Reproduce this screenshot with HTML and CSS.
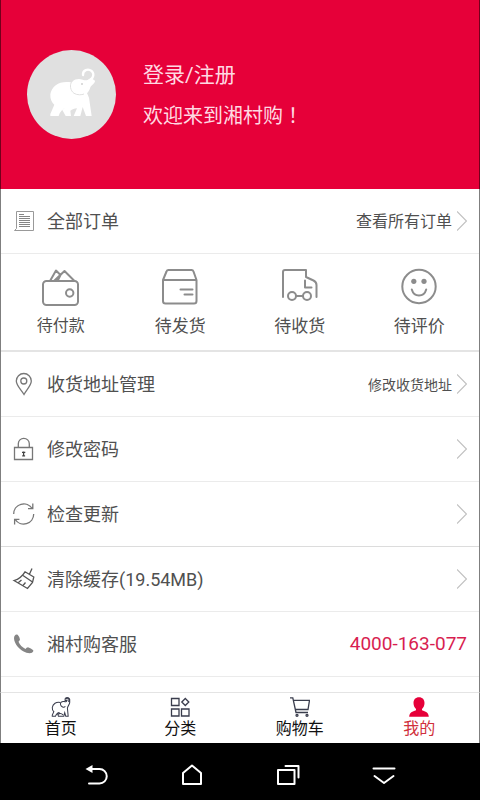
FILE: index.html
```html
<!DOCTYPE html>
<html lang="zh-CN">
<head>
<meta charset="utf-8">
<meta name="viewport" content="width=device-width, initial-scale=1">
<title>我的</title>
<link rel="stylesheet" href="styles.css">
</head>
<body>
<div class="app">
  <header class="profile">
    <svg class="avatar" viewBox="36 15 267 267" aria-hidden="true">
      <g fill="#fff">
        <path d="M168 112C138 106 110 120 106 148C105 162 110 172 118 179L106 207V213H131C134 202 142 193 152 187L142 195L152 213H168L166 197C172 193 178 191 186 190L176 213H196L203 186L213 213H230L222 158L215 142Z"/>
        <path d="M167 126C165 108 184 97 203 104C216 109 224 103 228 98L240 107C240 116 231 117 226 127C221 146 208 152 197 150C178 150 168 142 167 126Z"/>
        <path fill="none" stroke="#fff" stroke-width="7" stroke-linecap="round" d="M204 90C203 76 218 69 230 78C240 88 234 103 219 108"/>
      </g>
      <path fill="none" stroke="#e0e0e0" stroke-width="3" d="M171 108C163 120 166 137 177 145C188 151 200 150 207 147"/>
      <circle cx="201" cy="117" r="3" fill="#d0d0d0"/>
    </svg>
    <div class="profile-text">
      <a class="profile-login" href="#login">登录/注册</a>
      <p class="profile-welcome">欢迎来到湘村购<span class="mark" lang="zh-TW">！</span></p>
    </div>
  </header>

  <main class="content">
    <a class="row" href="#orders">
      <svg class="row-icon" viewBox="0 0 24 24" aria-hidden="true"><path stroke="#999" stroke-width="1" d="M4.500 2.500H21.500V21.500H2.500L4.500 19.500Z"/><path stroke="#858585" stroke-width="1" d="M7 5.500H12M7 7.500H18M7 9.500H18M7 11.500H18M7 13.500H18M7 15.500H18M7 17.500H18"/></svg>
      <span class="row-label">全部订单</span>
      <span class="row-note">查看所有订单</span>
      <svg class="chevron" viewBox="0 0 10 20" aria-hidden="true"><path d="M0 .5L9.500 10L0 19.500"/></svg>
    </a>

    <nav class="orders" aria-label="订单">
      <a class="order" href="#pay">
        <svg class="order-icon" viewBox="0 0 40 40" aria-hidden="true"><rect x="2" y="14" width="35" height="24" rx="3.500"/><circle cx="28.700" cy="26" r="3.700"/><path d="M9 14L15 3.500L18.500 7M13 14L23.500 4L33.500 14M16.500 14L19.500 8"/></svg>
        <span class="order-label order-label-compact">待付款</span>
      </a>
      <a class="order" href="#ship">
        <svg class="order-icon" viewBox="0 0 40 40" aria-hidden="true"><path d="M3 13L6.500 4.500Q7 3 8.500 3H31.500Q33 3 33.500 4.500L36.500 13V34Q36.500 36.500 34 36.500H5.500Q3 36.500 3 34ZM3 13H36.500M20.500 22.500H32.500M24.500 27.500H32.500"/></svg>
        <span class="order-label">待发货</span>
      </a>
      <a class="order" href="#receive">
        <svg class="order-icon" viewBox="0 0 40 40" aria-hidden="true"><path d="M3 30V5Q3 3 5 3H26V10L33.500 13.500Q36.500 15 36.500 18V30M25 13.500V20.500H31.500M16 29H23"/><circle cx="12" cy="29" r="4"/><circle cx="27" cy="29" r="4"/></svg>
        <span class="order-label">待收货</span>
      </a>
      <a class="order" href="#review">
        <svg class="order-icon" viewBox="0 0 40 40" aria-hidden="true"><circle cx="20" cy="19.500" r="16.700"/><path d="M12.800 22.500C15 30.500 25 30.500 27.200 22.500"/><g fill="#8c8c8c" stroke="none"><circle cx="14.800" cy="14.300" r="2.600"/><circle cx="25" cy="14.300" r="2.600"/></g></svg>
        <span class="order-label">待评价</span>
      </a>
    </nav>

    <a class="row" href="#address">
      <svg class="row-icon" viewBox="0 0 24 24" aria-hidden="true"><path d="M12 22.500C9 17.500 4.300 13.500 4.300 9A7.500 7.500 0 0 1 19.300 9C19.300 13.500 14.500 17.500 12 22.500Z"/><circle cx="11.800" cy="9" r="3"/></svg>
      <span class="row-label">收货地址管理</span>
      <span class="row-note row-note-small">修改收货地址</span>
      <svg class="chevron" viewBox="0 0 10 20" aria-hidden="true"><path d="M0 .5L9.500 10L0 19.500"/></svg>
    </a>
    <a class="row" href="#password">
      <svg class="row-icon" viewBox="0 0 24 24" aria-hidden="true"><path d="M2.500 10.500H20.500V22.500H2.500ZM6.300 10.500V6.800A5.500 5.500 0 0 1 17.300 6.800V10.500"/><path stroke="#444" d="M11.600 14.500V19M10 15.300H13.300M10.200 18.800H13.100"/></svg>
      <span class="row-label">修改密码</span>
      <svg class="chevron" viewBox="0 0 10 20" aria-hidden="true"><path d="M0 .5L9.500 10L0 19.500"/></svg>
    </a>
    <a class="row row-section-end" href="#update">
      <svg class="row-icon" viewBox="0 0 24 24" aria-hidden="true"><path d="M1.700 12A10 10 0 0 1 20.200 6.700M20.800 1.500V6.700H16M21.700 12A10 10 0 0 1 3.200 17.300M2.600 22.500V17.300H7.400"/></svg>
      <span class="row-label">检查更新</span>
      <svg class="chevron" viewBox="0 0 10 20" aria-hidden="true"><path d="M0 .5L9.500 10L0 19.500"/></svg>
    </a>
    <button class="row" type="button">
      <svg class="row-icon" viewBox="0 0 24 24" aria-hidden="true"><path stroke="#555" d="M20 1.500L17.300 7.500M13 4.800L21.800 10L20.500 15.500L15.500 21.500L2 13.500Q9 11.500 13 4.800ZM11 8.500L20.500 15M6.500 15.500L9.500 13M11 18.500L13.500 15.500"/></svg>
      <span class="row-label">清除缓存(19.54MB)</span>
      <svg class="chevron" viewBox="0 0 10 20" aria-hidden="true"><path d="M0 .5L9.500 10L0 19.500"/></svg>
    </button>
    <a class="row" href="tel:4000163077">
      <svg class="row-icon" viewBox="0 0 24 24" aria-hidden="true"><path fill="#858585" stroke="none" d="M2.500 4Q4 2 5.700 2.800Q8 5.500 8 7.500Q7.500 9 6.500 9.800Q8.500 14.500 13.500 17Q14.500 15.300 16 15.200Q19 16 21.300 18.200Q21.700 19.500 20 20.800C16 22.500 9 19 5.500 14.500C2.500 10.500 1.300 6.500 2.500 4Z"/></svg>
      <span class="row-label">湘村购客服</span>
      <span class="row-phone">4000-163-077</span>
    </a>
  </main>

  <nav class="tabs" aria-label="主导航">
    <a class="tab" href="#home">
      <svg class="tab-icon" viewBox="100 64 148 156" aria-hidden="true"><path stroke-width="8" d="M168 106C138 100 110 116 106 146C105 162 110 172 118 179L106 205V214H131C134 202 142 193 152 187C160 180 168 190 150 200L154 214H196L203 186L211 214H230L224 150C228 130 242 122 242 106V82C236 66 214 66 206 78V92L222 88C222 98 212 104 200 100C180 94 166 108 170 124C176 142 196 150 208 138M150 200Q172 184 190 204"/><path stroke-width="12" d="M210 76Q226 64 238 82L236 104"/></svg>
      <span class="tab-label">首页</span>
    </a>
    <a class="tab" href="#category">
      <svg class="tab-icon" viewBox="0 0 20 20" aria-hidden="true"><path d="M1.500 1.500H9V8.500H1.500ZM1.500 12H9V19H1.500ZM11.500 12H19V19H11.500ZM15.300 1.500L18.800 5L15.300 8.500L11.800 5Z"/></svg>
      <span class="tab-label">分类</span>
    </a>
    <a class="tab" href="#cart">
      <svg class="tab-icon" viewBox="0 0 20 20" aria-hidden="true"><path d="M0 .8H2.800L6 15.500H18M3.500 3.300H19.500L18 12.500H5.500"/><circle cx="7" cy="18.300" r="1"/><circle cx="17" cy="18.300" r="1"/></svg>
      <span class="tab-label">购物车</span>
    </a>
    <a class="tab tab-active" href="#me" aria-current="page">
      <svg class="tab-icon" viewBox="0 0 20 20" aria-hidden="true"><path fill="#e60039" stroke="none" d="M10 .3C13.500 .3 15.500 2.700 15.500 6C15.500 8.500 14.500 10.700 13 12V13.300C16.500 14.500 19.500 15.500 19.800 19.800H.2C.5 15.500 3.500 14.500 7 13.300V12C5.500 10.700 4.500 8.500 4.500 6C4.500 2.700 6.500 .3 10 .3Z"/></svg>
      <span class="tab-label">我的</span>
    </a>
  </nav>

  <footer class="system">
    <button class="system-key" type="button" aria-label="返回"><svg class="system-icon" viewBox="0 0 24 24"><path d="M7 6H15.500A7.200 7.200 0 0 1 15.500 20.500H5"/><path fill="#fff" stroke="none" d="M1.500 6L8.500 2V10Z"/></svg></button>
    <button class="system-key" type="button" aria-label="主屏幕"><svg class="system-icon" viewBox="0 0 24 24"><path d="M3 10L12 2.500L21 10V21H3Z"/></svg></button>
    <button class="system-key" type="button" aria-label="最近任务"><svg class="system-icon" viewBox="0 0 24 24"><path d="M2 7H18.500V21H2ZM9.500 3H22.500V14.500"/></svg></button>
    <button class="system-key" type="button" aria-label="隐藏"><svg class="system-icon" viewBox="0 0 24 24"><path d="M1.500 5.500H22.500M2.500 13L12 20L21.500 13"/></svg></button>
  </footer>
</div>
</body>
</html>
```
FILE: styles.css
```css
* {
  box-sizing: border-box;
}

body {
  margin: 0;
  background: #fff;
  color: #505050;
  font-family: Roboto, "Noto Sans CJK SC", sans-serif;
}

a {
  color: inherit;
  text-decoration: none;
}

button {
  border: 0;
  background: none;
  color: inherit;
  font: inherit;
  text-align: left;
}

svg {
  display: block;
  flex: none;
  fill: none;
}

.app {
  display: flex;
  flex-direction: column;
  min-height: 100vh;
}

.profile,
.content,
.tabs {
  border-inline: 1px solid rgba(0, 0, 0, 0.5);
}

.profile {
  display: flex;
  align-items: center;
  gap: 27px;
  padding: 50px 26px;
  background: #e60039;
  color: #ffd9e2;
}

.avatar {
  width: 89px;
  height: 89px;
  border-radius: 50%;
  background: #e0e0e0;
}

.profile-text {
  display: grid;
  gap: 12px;
  padding-top: 2px;
}

.profile-login {
  font-size: 21px;
  line-height: 28px;
}

.profile-welcome {
  margin: 0;
  font-size: 20px;
  line-height: 28px;
}

.mark {
  font-family: "Noto Sans CJK TC", sans-serif;
}

.content {
  flex: 1;
}

.row {
  display: flex;
  align-items: center;
  width: 100%;
  height: 65px;
  padding: 0 12px 0 11px;
  border-bottom: 1px solid #ebebeb;
}

.row-section-end {
  border-bottom-color: #dcdcdc;
}

.row-icon {
  width: 24px;
  height: 24px;
  margin-right: 11px;
  stroke: #777;
  stroke-width: 1.3;
}

.row-label {
  flex: 1;
  padding-top: 2px;
  font-size: 18px;
  line-height: 24px;
}

.row-note {
  padding-top: 2px;
  font-size: 16px;
  line-height: 24px;
}

.row-note-small {
  font-size: 14px;
}

.row-phone {
  color: #d81e50;
  font-size: 19px;
  line-height: 24px;
}

.chevron {
  width: 10px;
  height: 20px;
  margin-left: 5px;
  stroke: #c0c0c0;
  stroke-width: 1.2;
}

.orders {
  display: grid;
  grid-template-columns: repeat(4, 1fr);
  height: 98px;
  padding-top: 13px;
  border-bottom: 2px solid #e4e4e4;
}

.order {
  display: flex;
  flex-direction: column;
  align-items: center;
  gap: 7px;
}

.order-icon {
  width: 40px;
  height: 40px;
  stroke: #8c8c8c;
  stroke-width: 2;
  stroke-linecap: round;
  stroke-linejoin: round;
}

.order-label {
  font-size: 17px;
  line-height: 24px;
}

.order-label-compact {
  font-size: 16px;
}

.tabs {
  display: grid;
  grid-template-columns: repeat(4, 1fr);
  height: 51px;
  padding-top: 4px;
  border-top: 1px solid #e4e4e4;
  color: #111;
}

.tab {
  display: flex;
  flex-direction: column;
  align-items: center;
}

.tab-icon {
  width: 20px;
  height: 20px;
  stroke: #3a3d4d;
  stroke-width: 1.3;
}

.tab-label {
  font-size: 16px;
  line-height: 24px;
}

.tab-active {
  color: #d0303c;
}

.system {
  display: grid;
  grid-template-columns: repeat(4, 1fr);
  height: 57px;
  padding: 0 10%;
  background: #000;
}

.system-key {
  display: grid;
  place-items: center;
  padding: 6px 0 0;
}

.system-icon {
  width: 24px;
  height: 24px;
  stroke: #fff;
  stroke-width: 2;
  stroke-linejoin: round;
  stroke-linecap: round;
}
```
